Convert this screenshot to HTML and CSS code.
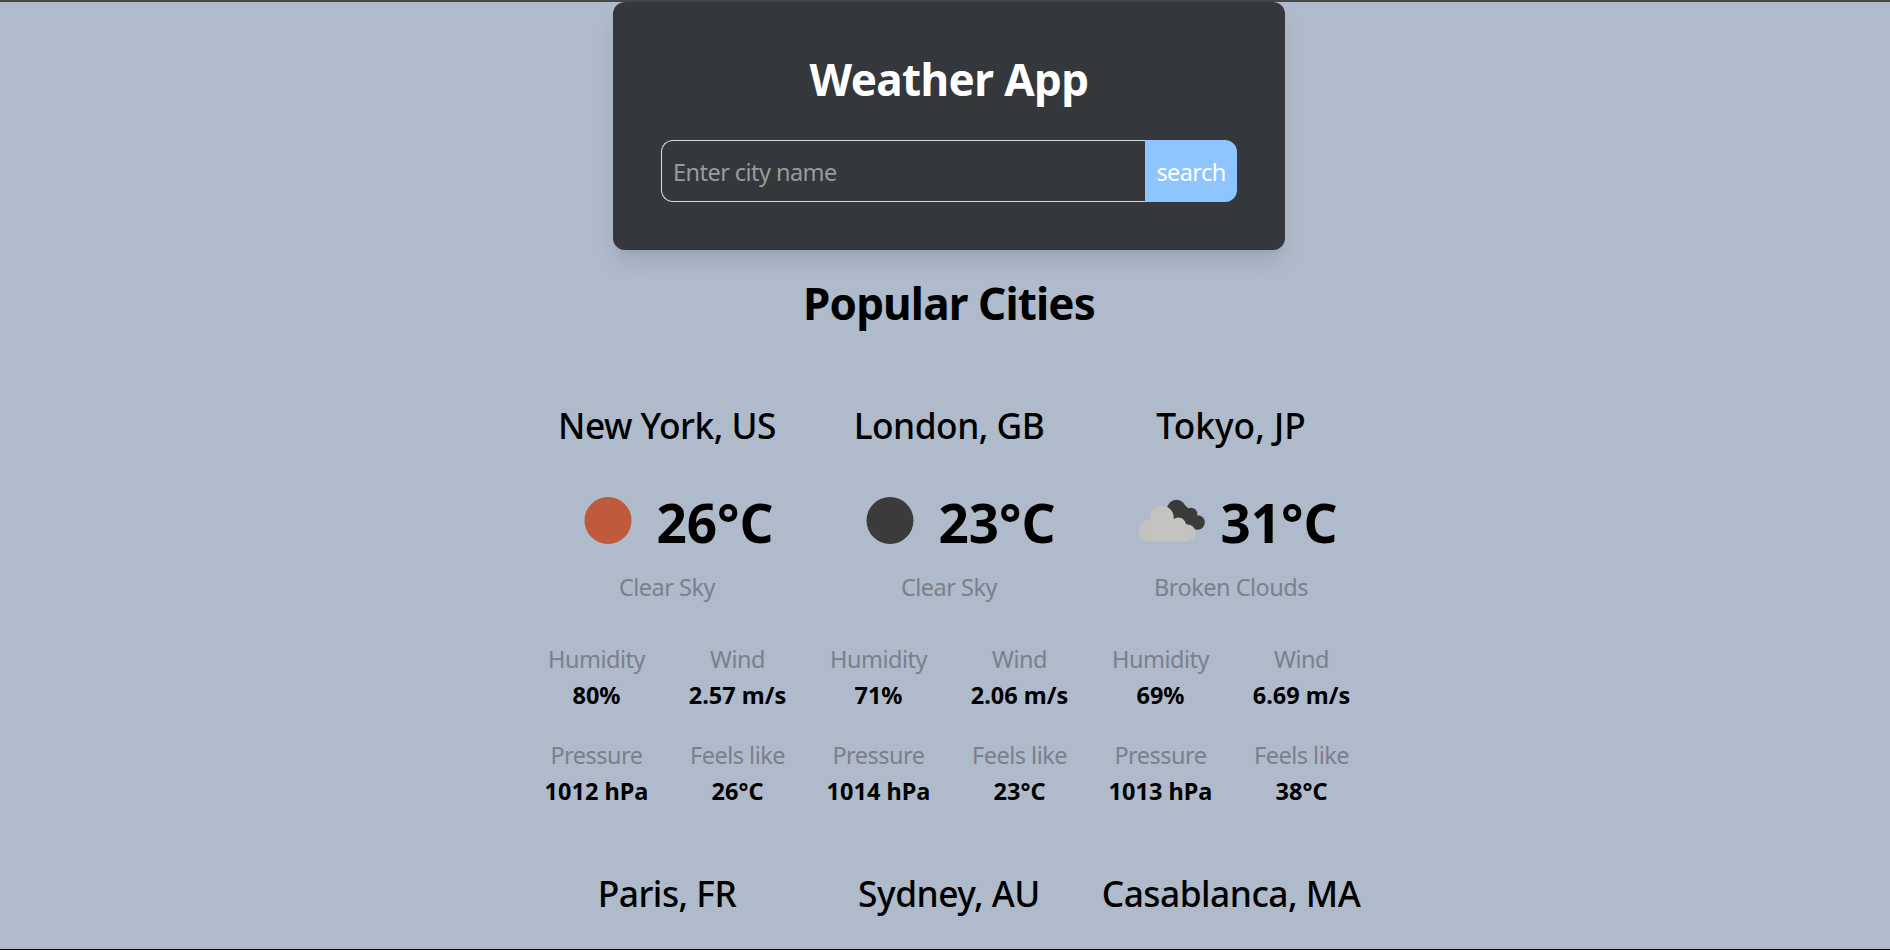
FILE: index.html
```html
<!DOCTYPE html>
<html lang="en">
<head>
<meta charset="utf-8">
<title>Weather App</title>
<link rel="stylesheet" href="styles.css">
</head>
<body>
<main class="page">
  <section class="search-card">
    <h1 class="title">Weather App</h1>
    <form class="search-form">
      <input class="search-input" type="text" placeholder="Enter city name">
      <button class="search-button" type="button">search</button>
    </form>
  </section>
  <h2 class="title popular-title">Popular Cities</h2>
  <section class="cities">
    <article class="city">
      <h3 class="city-name">New York, US</h3>
      <div class="now">
        <svg class="icon" viewBox="0 0 96 96"><circle cx="48" cy="47.500" r="23.5" fill="#bf5a3c"/></svg>
        <span class="temp">26°C</span>
      </div>
      <p class="desc">Clear Sky</p>
      <div class="stats">
        <div><p class="label">Humidity</p><p class="value">80%</p></div>
        <div><p class="label">Wind</p><p class="value">2.57 m/s</p></div>
        <div><p class="label">Pressure</p><p class="value">1012 hPa</p></div>
        <div><p class="label">Feels like</p><p class="value">26°C</p></div>
      </div>
    </article>
    <article class="city">
      <h3 class="city-name">London, GB</h3>
      <div class="now">
        <svg class="icon" viewBox="0 0 96 96"><circle cx="48" cy="47.500" r="23.5" fill="#3b3b3b"/></svg>
        <span class="temp">23°C</span>
      </div>
      <p class="desc">Clear Sky</p>
      <div class="stats">
        <div><p class="label">Humidity</p><p class="value">71%</p></div>
        <div><p class="label">Wind</p><p class="value">2.06 m/s</p></div>
        <div><p class="label">Pressure</p><p class="value">1014 hPa</p></div>
        <div><p class="label">Feels like</p><p class="value">23°C</p></div>
      </div>
    </article>
    <article class="city">
      <h3 class="city-name tokyo">Tokyo, JP</h3>
      <div class="now">
        <svg class="icon" viewBox="0 0 96 96">
          <g fill="#3b3b3b">
            <circle cx="52.5" cy="36.5" r="9.7"/><circle cx="67" cy="41" r="6.3"/><circle cx="73.5" cy="49.5" r="7.3"/>
            <path d="M46 37L62 33L73 44V56L60 50L46 44Z"/>
          </g>
          <g fill="#c3c3c0">
            <circle cx="25.5" cy="57.5" r="10.7"/><circle cx="38" cy="44.5" r="11.7"/><circle cx="54.5" cy="52" r="7.5"/><circle cx="63.3" cy="59.7" r="8.3"/>
            <path d="M25.5 68.200H63.300L60 50L48 46H28L22 55Z"/>
          </g>
        </svg>
        <span class="temp">31°C</span>
      </div>
      <p class="desc">Broken Clouds</p>
      <div class="stats">
        <div><p class="label">Humidity</p><p class="value">69%</p></div>
        <div><p class="label">Wind</p><p class="value">6.69 m/s</p></div>
        <div><p class="label">Pressure</p><p class="value">1013 hPa</p></div>
        <div><p class="label">Feels like</p><p class="value">38°C</p></div>
      </div>
    </article>
    <article class="city"><h3 class="city-name">Paris, FR</h3></article>
    <article class="city"><h3 class="city-name">Sydney, AU</h3></article>
    <article class="city"><h3 class="city-name">Casablanca, MA</h3></article>
  </section>
</main>
</body>
</html>
```
FILE: styles.css
```css
* { box-sizing: border-box; margin: 0; padding: 0; }

body {
  font-family: "Segoe UI", "Noto Sans", "Open Sans", sans-serif;
  font-size: 23.5px;
  line-height: 36px;
  background: #afbacb;
  color: #000;
  overflow: hidden;
}

.page {
  height: 950px;
  overflow: hidden;
  padding-left: 8px;
  border-top: 2px solid #474747;
  border-bottom: 1px solid #000;
  display: flex;
  flex-direction: column;
  align-items: center;
}

.search-card {
  flex: none;
  width: 672px;
  height: 248px;
  padding: 47px 48px 48px;
  border-radius: 12px;
  background: #34373c;
  box-shadow: 0 15px 22px -4px rgba(0, 0, 0, 0.1), 0 6px 9px -6px rgba(0, 0, 0, 0.1);
}

.title {
  font-size: 44px;
  font-weight: 700;
  line-height: 60px;
  letter-spacing: -0.6px;
  text-align: center;
}

.search-card .title { color: #fff; }

.search-form { display: flex; height: 62px; margin-top: 31px; }

.search-input {
  flex: 1;
  min-width: 0;
  padding: 1px 11px 0;
  font: inherit;
  letter-spacing: -0.55px;
  color: #fff;
  background: transparent;
  border: 1px solid #d5dede;
  border-right: 0;
  border-radius: 12px 0 0 12px;
}

.search-input::placeholder { color: #9b9b9b; opacity: 1; }

.search-button {
  width: 92px;
  padding-top: 1px;
  font: inherit;
  letter-spacing: -0.6px;
  color: #fff;
  background: #8ec5ff;
  border: 0;
  border-radius: 0 12px 12px 0;
}

.popular-title { margin-top: 23px; letter-spacing: -0.85px; }

.cities {
  flex: none;
  display: grid;
  grid-template-columns: repeat(3, 282px);
  row-gap: 57px;
  margin-top: 65px;
  text-align: center;
}

.city-name {
  font-size: 35.3px;
  font-weight: 500;
  line-height: 54px;
  letter-spacing: -0.5px;
  white-space: nowrap;
}

.city-name.tokyo { letter-spacing: 0; }

.now {
  display: flex;
  align-items: center;
  justify-content: center;
  height: 96px;
  margin-top: 21px;
}

.icon { width: 96px; height: 96px; flex: none; }
.temp { padding-top: 3px; font-size: 53px; font-weight: 700; line-height: 54px; }
.desc, .label { color: #7b808b; letter-spacing: -0.5px; }
.stats { display: grid; grid-template-columns: 1fr 1fr; row-gap: 24px; margin-top: 36px; }
.value { font-weight: 700; }
```
